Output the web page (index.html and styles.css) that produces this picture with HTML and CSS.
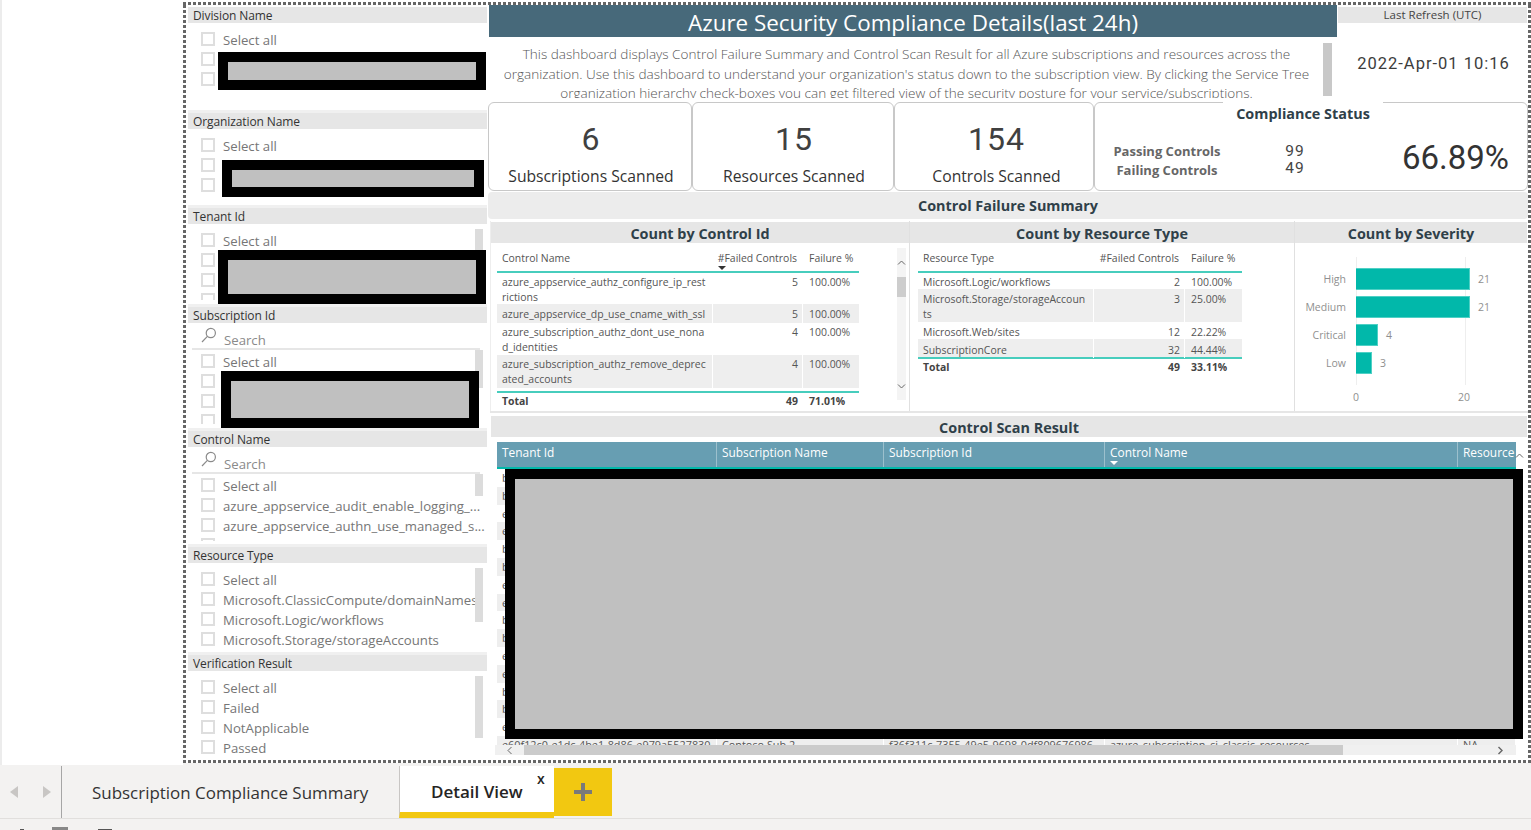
FILE: index.html
```html
<!DOCTYPE html>
<html lang="en">
<head>
<meta charset="utf-8">
<title>Azure Security Compliance Details</title>
<link rel="stylesheet" href="styles.css">
</head>
<body>
<div class="app">
  <div class="workspace">
    <div class="gutter"></div>
    <div class="canvas">
      <div class="slicers">
        <section class="slicer s-division">
          <h3 class="slicer-head">Division Name</h3>
          <div class="slicer-list">
            <div class="opt"><i class="cb"></i>Select all</div>
            <div class="opt"><i class="cb"></i></div>
            <div class="opt"><i class="cb"></i></div>
          </div>
          <div class="redact r-division"></div>
        </section>
        <section class="slicer s-org">
          <h3 class="slicer-head">Organization Name</h3>
          <div class="slicer-list">
            <div class="opt"><i class="cb"></i>Select all</div>
            <div class="opt"><i class="cb"></i></div>
            <div class="opt"><i class="cb"></i></div>
          </div>
          <div class="redact r-org"></div>
        </section>
        <section class="slicer s-tenant">
          <h3 class="slicer-head">Tenant Id</h3>
          <div class="slicer-list clip-tenant">
            <div class="opt"><i class="cb"></i>Select all</div>
            <div class="opt"><i class="cb"></i></div>
            <div class="opt"><i class="cb"></i></div>
            <div class="opt"><i class="cb"></i></div>
          </div>
          <div class="vscroll vs-tenant"></div>
          <div class="redact r-tenant"></div>
        </section>
        <section class="slicer s-sub">
          <h3 class="slicer-head">Subscription Id</h3>
          <div class="search">
            <svg class="search-icon" width="16" height="16" viewBox="0 0 16 16"><circle cx="9.8" cy="6" r="4.6" fill="none" stroke="#8a8a8a" stroke-width="1.2"/><path d="M6.4 9.4 1 15" fill="none" stroke="#8a8a8a" stroke-width="1.2"/></svg>
            <span class="search-text">Search</span>
          </div>
          <div class="slicer-list flush clip-sub">
            <div class="opt"><i class="cb"></i>Select all</div>
            <div class="opt"><i class="cb"></i></div>
            <div class="opt"><i class="cb"></i></div>
            <div class="opt"><i class="cb"></i></div>
          </div>
          <div class="vscroll vs-sub"></div>
          <div class="redact r-sub"></div>
        </section>
        <section class="slicer s-control">
          <h3 class="slicer-head">Control Name</h3>
          <div class="search">
            <svg class="search-icon" width="16" height="16" viewBox="0 0 16 16"><circle cx="9.8" cy="6" r="4.6" fill="none" stroke="#8a8a8a" stroke-width="1.2"/><path d="M6.4 9.4 1 15" fill="none" stroke="#8a8a8a" stroke-width="1.2"/></svg>
            <span class="search-text">Search</span>
          </div>
          <div class="slicer-list flush clip-control">
            <div class="opt"><i class="cb"></i>Select all</div>
            <div class="opt"><i class="cb"></i>azure_appservice_audit_enable_logging_...</div>
            <div class="opt"><i class="cb"></i>azure_appservice_authn_use_managed_s...</div>
            <div class="opt"><i class="cb"></i></div>
          </div>
          <div class="vscroll vs-control"></div>
        </section>
        <section class="slicer s-resource">
          <h3 class="slicer-head">Resource Type</h3>
          <div class="slicer-list">
            <div class="opt"><i class="cb"></i>Select all</div>
            <div class="opt"><i class="cb"></i>Microsoft.ClassicCompute/domainNames</div>
            <div class="opt"><i class="cb"></i>Microsoft.Logic/workflows</div>
            <div class="opt"><i class="cb"></i>Microsoft.Storage/storageAccounts</div>
          </div>
          <div class="vscroll vs-resource"></div>
        </section>
        <section class="slicer s-verify">
          <h3 class="slicer-head">Verification Result</h3>
          <div class="slicer-list">
            <div class="opt"><i class="cb"></i>Select all</div>
            <div class="opt"><i class="cb"></i>Failed</div>
            <div class="opt"><i class="cb"></i>NotApplicable</div>
            <div class="opt"><i class="cb"></i>Passed</div>
          </div>
          <div class="vscroll vs-verify"></div>
        </section>
      </div>

      <div class="main">
        <div class="top-row">
          <div class="intro">
            <h1 class="title">Azure Security Compliance Details(last 24h)</h1>
            <div class="desc-wrap">
              <p class="desc">This dashboard displays Control Failure Summary and Control Scan Result for all Azure subscriptions and resources across the<br>organization. Use this dashboard to understand your organization's status down to the subscription view. By clicking the Service Tree<br>organization hierarchy check-boxes you can get filtered view of the security posture for your service/subscriptions.</p>
              <div class="desc-scroll"></div>
            </div>
          </div>
          <div class="refresh">
            <div class="refresh-head">Last Refresh (UTC)</div>
            <div class="refresh-time">2022-Apr-01 10:16</div>
          </div>
        </div>

        <div class="cards">
          <div class="card c1"><div class="card-value">6</div><div class="card-label">Subscriptions Scanned</div></div>
          <div class="card c2"><div class="card-value">15</div><div class="card-label">Resources Scanned</div></div>
          <div class="card c3"><div class="card-value">154</div><div class="card-label">Controls Scanned</div></div>
          <div class="card status">
            <div class="status-title">Compliance Status</div>
            <div class="status-labels"><div>Passing Controls</div><div>Failing Controls</div></div>
            <div class="status-nums"><div>99</div><div>49</div></div>
            <div class="status-pct">66.89%</div>
          </div>
        </div>

        <div class="section-bar">Control Failure Summary</div>

        <div class="panels">
          <section class="panel p-control">
            <h2 class="panel-head">Count by Control Id</h2>
            <div class="matrix m-control">
              <div class="m-row m-header">
                <div class="m-name">Control Name</div>
                <div class="m-num sorted">#Failed Controls<i class="sort"></i></div>
                <div class="m-pct">Failure %</div>
              </div>
              <div class="m-row h31"><div class="m-name">azure_appservice_authz_configure_ip_rest<br>rictions</div><div class="m-num">5</div><div class="m-pct">100.00%</div></div>
              <div class="m-row h19 alt pad3"><div class="m-name">azure_appservice_dp_use_cname_with_ssl</div><div class="m-num">5</div><div class="m-pct">100.00%</div></div>
              <div class="m-row h32"><div class="m-name">azure_subscription_authz_dont_use_nona<br>d_identities</div><div class="m-num">4</div><div class="m-pct">100.00%</div></div>
              <div class="m-row h33 alt"><div class="m-name">azure_subscription_authz_remove_deprec<br>ated_accounts</div><div class="m-num">4</div><div class="m-pct">100.00%</div></div>
              <div class="m-row m-total gap3"><div class="m-name">Total</div><div class="m-num">49</div><div class="m-pct">71.01%</div></div>
            </div>
            <div class="matrix-scroll">
              <svg width="9" height="7" viewBox="0 0 9 7"><path d="M1 5.5 4.5 2 8 5.5" fill="none" stroke="#666" stroke-width="1"/></svg>
              <div class="matrix-thumb"></div>
              <svg class="arrow-down" width="9" height="7" viewBox="0 0 9 7"><path d="M1 1.5 4.5 5 8 1.5" fill="none" stroke="#666" stroke-width="1"/></svg>
            </div>
          </section>

          <section class="panel p-resource">
            <h2 class="panel-head">Count by Resource Type</h2>
            <div class="matrix m-resource">
              <div class="m-row m-header">
                <div class="m-name">Resource Type</div>
                <div class="m-num">#Failed Controls</div>
                <div class="m-pct">Failure %</div>
              </div>
              <div class="m-row h16"><div class="m-name">Microsoft.Logic/workflows</div><div class="m-num">2</div><div class="m-pct">100.00%</div></div>
              <div class="m-row h33 alt pad3"><div class="m-name">Microsoft.Storage/storageAccoun<br>ts</div><div class="m-num">3</div><div class="m-pct">25.00%</div></div>
              <div class="m-row h17 pad3"><div class="m-name">Microsoft.Web/sites</div><div class="m-num">12</div><div class="m-pct">22.22%</div></div>
              <div class="m-row h18 alt pad4"><div class="m-name">SubscriptionCore</div><div class="m-num">32</div><div class="m-pct">44.44%</div></div>
              <div class="m-row m-total"><div class="m-name">Total</div><div class="m-num">49</div><div class="m-pct">33.11%</div></div>
            </div>
          </section>

          <section class="panel p-severity">
            <h2 class="panel-head">Count by Severity</h2>
            <div class="sev-rows">
              <div class="sev-row"><span class="sev-label">High</span><span class="sev-bar" style="width:114px"></span><span class="sev-val">21</span></div>
              <div class="sev-row"><span class="sev-label">Medium</span><span class="sev-bar" style="width:114px"></span><span class="sev-val">21</span></div>
              <div class="sev-row"><span class="sev-label">Critical</span><span class="sev-bar" style="width:22px"></span><span class="sev-val">4</span></div>
              <div class="sev-row"><span class="sev-label">Low</span><span class="sev-bar" style="width:16px"></span><span class="sev-val">3</span></div>
            </div>
            <div class="sev-axis"><span>0</span><span>20</span></div>
          </section>
        </div>

        <section class="scan">
          <h2 class="scan-head">Control Scan Result</h2>
          <div class="scan-table">
            <div class="scan-row scan-columns">
              <div>Tenant Id</div>
              <div>Subscription Name</div>
              <div>Subscription Id</div>
              <div class="sorted">Control Name<i class="sort sort-white"></i></div>
              <div>Resource</div>
            </div>
            <div class="scan-body">
              <div class="scan-row"><div>b</div></div>
              <div class="scan-row alt"><div>b</div></div>
              <div class="scan-row"><div>e</div></div>
              <div class="scan-row alt"><div>e</div></div>
              <div class="scan-row"><div>b</div></div>
              <div class="scan-row alt"><div>b</div></div>
              <div class="scan-row"><div>e</div></div>
              <div class="scan-row alt"><div>e</div></div>
              <div class="scan-row"><div>b</div></div>
              <div class="scan-row alt"><div>b</div></div>
              <div class="scan-row"><div>e</div></div>
              <div class="scan-row alt"><div>e</div></div>
              <div class="scan-row"><div>b</div></div>
              <div class="scan-row alt"><div>b</div></div>
              <div class="scan-row"><div>e</div></div>
              <div class="scan-row alt"><div>e60f12c0-e1dc-4be1-8d86-e979a5527830</div><div>Contoso Sub 2</div><div>f36f311c-7355-49e5-9698-0df809676986</div><div>azure_subscription_si_classic_resources</div><div>NA</div></div>
            </div>
            <div class="hscroll">
              <svg class="hs-left" width="7" height="9" viewBox="0 0 7 9"><path d="M5.5 1 2 4.5 5.5 8" fill="none" stroke="#666" stroke-width="1"/></svg>
              <div class="hs-thumb"></div>
              <svg class="hs-right" width="7" height="9" viewBox="0 0 7 9"><path d="M1.5 1 5 4.5 1.5 8" fill="none" stroke="#666" stroke-width="1.4"/></svg>
            </div>
          </div>
          <svg class="scan-up" width="9" height="7" viewBox="0 0 9 7"><path d="M1 5.5 4.5 2 8 5.5" fill="none" stroke="#666" stroke-width="1"/></svg>
          <div class="redact r-table"></div>
        </section>
      </div>
    </div>
  </div>

  <nav class="tabs">
    <div class="tab-nav">
      <svg width="8" height="12" viewBox="0 0 8 12"><path d="M8 0v12L0 6z" fill="#c8c6c4"/></svg>
      <svg width="8" height="12" viewBox="0 0 8 12"><path d="M0 0v12l8-6z" fill="#c8c6c4"/></svg>
    </div>
    <div class="tab tab-plain">Subscription Compliance Summary</div>
    <div class="tab tab-active">Detail View<span class="tab-close">x</span></div>
    <div class="tab-add">
      <svg width="18" height="18" viewBox="0 0 18 18"><path d="M7 0h4v7h7v4h-7v7H7v-7H0V7h7z" fill="#7a7a7a"/></svg>
    </div>
  </nav>
  <footer class="status-bar">
    <i class="mark m1"></i><i class="mark m2"></i><i class="mark m3"></i>
  </footer>
</div>
</body>
</html>
```
FILE: styles.css
```css
* { box-sizing: border-box; }
html, body { margin: 0; padding: 0; }
body {
  width: 1531px;
  height: 830px;
  overflow: hidden;
  background: #f3f2f1;
  font-family: "Open Sans", "Liberation Sans", sans-serif;
  color: #333;
}
h1, h2, h3, p { margin: 0; font: inherit; }
i { font-style: normal; }

.app { display: flex; flex-direction: column; height: 830px; }
.workspace { display: flex; height: 765px; flex: none; padding: 2px 0; background: linear-gradient(#fff 763px, #f3f2f1 763px); }
.gutter { width: 183px; border-left: 2px solid #ececec; background: #fff; margin: -2px 0; }

.canvas {
  width: 1348px;
  height: 761px;
  padding: 3px;
  display: flex;
  background-color: #fff;
  background-image:
    repeating-linear-gradient(90deg, #666 0 3px, transparent 3px 5px),
    repeating-linear-gradient(90deg, #666 0 3px, transparent 3px 5px),
    repeating-linear-gradient(0deg, #666 0 3px, transparent 3px 5px),
    repeating-linear-gradient(0deg, #666 0 3px, transparent 3px 5px);
  background-size: 100% 3px, 100% 3px, 3px 100%, 3px 100%;
  background-position: 0 0, 0 100%, 0 0, 100% 0;
  background-repeat: no-repeat;
}

/* slicers */
.slicers { width: 302px; flex: none; padding: 2px 0 0 2px; display: flex; flex-direction: column; }
.slicer { position: relative; width: 299px; border-bottom: 3px solid #f0f0f0; overflow: hidden; flex: none; }
.s-division { height: 106px; }
.s-org { height: 95px; }
.s-tenant { height: 99px; }
.s-sub { height: 124px; }
.s-control { height: 116px; }
.s-resource { height: 108px; }
.s-verify { height: 103px; border-bottom: 0; }
.slicer-head { height: 16px; background: #e6e6e6; padding-left: 5px; font-size: 12px; line-height: 18px; color: #333; letter-spacing: -0.1px; }
.slicer-list { padding: 6px 0 0 13px; overflow: hidden; }
.slicer-list.flush { padding-top: 0; margin-top: 1px; }
.clip-tenant { height: 76px; }
.clip-sub { height: 73px; }
.clip-control { height: 66px; margin-top: 2px; }
.opt { display: flex; align-items: center; height: 20px; padding-top: 1px; font-size: 13.2px; color: #767676; white-space: nowrap; }
.cb { width: 14px; height: 14px; border: 2px solid #dedede; margin: -2px 8px 0 0; flex: none; }
.search { display: flex; align-items: center; height: 27px; margin-left: 4px; width: 288px; padding: 0 0 1px 9px; border-bottom: 2px solid #e6e6e6; font-size: 13.2px; color: #8a8a8a; }
.search-icon { flex: none; margin-right: 7px; }
.search-text { padding-top: 9px; }
.vscroll { position: absolute; left: 287px; width: 8px; background: #dcdcdc; }
.vs-tenant { top: 21px; height: 22px; }
.vs-sub { top: 43px; height: 38px; }
.vs-control { top: 43px; height: 22px; }
.vs-resource { top: 21px; height: 54px; }
.vs-verify { top: 21px; height: 62px; }

.redact { position: absolute; border: 10px solid #000; background: #c0c0c0; }
.r-division { left: 30px; top: 45px; width: 268px; height: 38px; }
.r-org { left: 34px; top: 47px; width: 262px; height: 37px; }
.r-tenant { left: 30px; top: 42px; width: 268px; height: 54px; }
.r-sub { left: 33px; top: 64px; width: 258px; height: 57px; }
.r-table { left: 14px; top: 53px; width: 1018px; height: 270px; }

/* main column */
.main { width: 1040px; flex: none; display: flex; flex-direction: column; }
.top-row { display: flex; height: 97px; flex: none; }
.intro { width: 849px; margin-left: 1px; padding-right: 1px; }
.title { height: 32px; background: #47697a; color: #fff; text-align: center; font-size: 22.4px; line-height: 36px; white-space: nowrap; }
.desc-wrap { position: relative; height: 61px; overflow: hidden; }
.desc { padding-top: 8px; width: 835px; text-align: center; font-size: 13.55px; font-weight: 300; line-height: 19.5px; color: #555; white-space: nowrap; }
.desc-scroll { position: absolute; left: 834px; top: 6px; width: 9px; height: 53px; background: #c8c8c8; }
.refresh { width: 189px; padding-top: 2px; }
.refresh-head { height: 16px; background: #e6e6e6; text-align: center; font-size: 11.5px; line-height: 16px; color: #444; }
.refresh-time { padding-left: 2px; text-align: center; font-family: Roboto, sans-serif; font-size: 16.5px; letter-spacing: 1px; line-height: 20px; margin-top: 31px; color: #3c3c3c; }

.cards { display: flex; height: 89px; flex: none; }
.card { height: 89px; padding-left: 2px; border: 1px solid #c8c8c8; border-radius: 6px; background: #fff; text-align: center; }
.c1 { width: 204px; }
.c2 { width: 202px; }
.c3 { width: 200px; padding-left: 5px; }
.card-value { font-family: Roboto, sans-serif; font-size: 32px; letter-spacing: 1px; line-height: 40px; margin-top: 16px; color: #404040; }
.card-label { font-size: 15.7px; line-height: 22px; margin-top: 6px; color: #333; white-space: nowrap; }

.status { position: relative; width: 434px; padding-left: 0; display: flex; text-align: left; }
.status-title { position: absolute; left: 128px; top: -1px; width: 160px; height: 22px; background: #fff; text-align: center; font-size: 14.4px; font-weight: 700; line-height: 24px; color: #2f4049; white-space: nowrap; }
.status-labels { width: 144px; padding-top: 39px; text-align: center; font-size: 13px; font-weight: 700; line-height: 18.5px; color: #666; white-space: nowrap; }
.status-nums { width: 112px; padding-top: 40px; text-align: center; font-family: Roboto, sans-serif; font-size: 15.5px; letter-spacing: 1px; line-height: 17px; color: #444; }
.status-pct { margin-left: auto; padding: 34px 18px 0 0; font-family: Roboto, sans-serif; font-size: 33px; line-height: 42px; color: #333; }

.section-bar { height: 27px; margin-top: 1px; background: #ececec; border-radius: 4px; text-align: center; font-size: 14.4px; font-weight: 700; line-height: 27px; color: #2f4049; flex: none; }

.panels { display: flex; height: 192px; margin: 2px 0 0 2px; flex: none; border-bottom: 2px solid #e6e6e6; }
.panel { position: relative; flex: none; border-right: 1px solid #e0e0e0; }
.p-control { width: 420px; border-left: 1px solid #eee; }
.p-resource { width: 385px; }
.p-severity { width: 232px; border-right: 0; }
.panel-head { height: 21px; margin-top: 1px; background: #e6e6e6; text-align: center; font-size: 14.4px; font-weight: 700; line-height: 23px; color: #2f4049; }

.matrix { margin-top: 5px; font-size: 10.45px; color: #555; }
.m-control { margin-left: 6px; width: 362px; }
.m-resource { margin-left: 8px; width: 324px; }
.m-row { display: grid; line-height: 14.5px; }
.m-control .m-row { grid-template-columns: 215px 90px 57px; }
.m-resource .m-row { grid-template-columns: 175px 91px 58px; }
.m-name { padding: 2px 0 0 5px; white-space: nowrap; overflow: hidden; }
.m-num { padding: 2px 4px 0 0; text-align: right; border-left: 1px solid #fff; white-space: nowrap; }
.m-pct { padding: 2px 0 0 6px; border-left: 1px solid #fff; white-space: nowrap; }
.m-header { height: 25px; border-bottom: 2px solid #47cdbd; }
.m-header > div { padding-top: 3px; }
.m-header .m-num { padding-right: 5px; }
.m-header .sorted { position: relative; }
.sort { position: absolute; left: 5px; bottom: 1px; border-left: 4px solid transparent; border-right: 4px solid transparent; border-top: 4px solid #333; }
.sort-white { left: 5px; bottom: 2px; border-top-color: #fff; }
.h16 { height: 16px; }
.h17 { height: 17px; }
.h18 { height: 18px; }
.h19 { height: 19px; }
.h31 { height: 31px; }
.h32 { height: 32px; }
.h33 { height: 33px; }
.pad3 > div { padding-top: 3px; }
.pad4 > div { padding-top: 4px; }
.alt { background: #eeeeee; }
.m-total { border-top: 2px solid #47cdbd; font-weight: 700; color: #444; }
.m-total > div { padding-top: 1px; }
.gap3 { margin-top: 3px; }
.matrix-scroll { position: absolute; left: 406px; top: 27px; width: 9px; height: 152px; background: #f4f4f4; display: flex; flex-direction: column; align-items: center; padding-top: 11px; }
.matrix-thumb { width: 9px; height: 20px; margin-top: 11px; background: #cdcdcd; }
.arrow-down { margin-top: auto; margin-bottom: 10px; }

.sev-rows {
  height: 128px;
  margin-top: 14px;
  padding-top: 11px;
  display: flex;
  flex-direction: column;
  gap: 6px;
  background-image: linear-gradient(#eee, #eee), linear-gradient(#eee, #eee);
  background-size: 1px 100%, 1px 100%;
  background-position: 61px 0, 170px 0;
  background-repeat: no-repeat;
}
.sev-row { display: flex; align-items: center; height: 22px; font-size: 10.5px; color: #8f8f8f; }
.sev-label { width: 51px; margin-right: 10px; text-align: right; flex: none; }
.sev-bar { height: 22px; background: #01b8aa; flex: none; border: 1px solid #4fd0c5; border-left: 0; }
.sev-val { margin-left: 8px; }
.sev-axis { display: flex; gap: 98px; padding-left: 56px; margin-top: 5px; font-size: 10.5px; line-height: 14px; color: #8f8f8f; }
.sev-axis span { width: 10px; display: flex; justify-content: center; }

/* scan table */
.scan { position: relative; flex: 1; margin: 3px 0 0 3px; }
.scan-head { height: 21px; margin-right: 1px; background: #e6e6e6; text-align: center; font-size: 14.4px; font-weight: 700; line-height: 23px; color: #2f4049; }
.scan-table { width: 1019px; margin: 5px 0 0 6px; }
.scan-row { display: grid; grid-template-columns: 220px 167px 221px 353px 58px; height: 17.8px; font-size: 10.85px; line-height: 17.8px; color: #555; }
.scan-row > div { padding-left: 5px; white-space: nowrap; overflow: hidden; border-right: 1px solid #fff; }
.scan-columns { height: 27px; background: #679eb2; border-bottom: 2px solid #01b8aa; color: #fff; font-size: 11.9px; line-height: 21px; }
.scan-columns > div { position: relative; border-right: 1px solid #9cc0cd; }
.scan-columns > div:last-child { border-right: 0; }
.scan-body { height: 276px; overflow: hidden; }
.hscroll { position: relative; height: 10px; background: #f0f0f0; margin-left: -2px; }
.hs-thumb { position: absolute; left: 29px; top: 0; width: 819px; height: 10px; background: #cbcbcb; }
.hs-left { position: absolute; left: 11px; top: 1px; }
.hs-right { position: absolute; left: 1002px; top: 1px; }
.scan-up { position: absolute; left: 1024px; top: 36px; }

/* tabs */
.tabs { display: flex; height: 54px; flex: none; background: #f3f2f1; border-bottom: 1px solid #e1dfdd; }
.tab-nav { width: 62px; margin-top: 1px; border-right: 1px solid #a6a6a6; display: flex; align-items: center; gap: 25px; padding: 0 0 0 10px; }
.tab { display: flex; align-items: center; font-size: 16.95px; white-space: nowrap; }
.tab-plain { width: 337px; padding: 2px 0 0 30px; color: #333; }
.tab-active { position: relative; width: 155px; margin-top: 1px; padding: 5px 0 0 31px; background: #fff; border-left: 1px solid #c8c6c4; border-bottom: 6px solid #f2c811; font-weight: 600; font-size: 17px; color: #252423; }
.tab-close { position: absolute; left: 137px; top: 3px; font-size: 14px; font-weight: 600; color: #252423; }
.tab-add { width: 58px; height: 48px; margin-top: 3px; background: #f2c811; display: flex; align-items: center; justify-content: center; }

.status-bar { position: relative; flex: 1; display: flex; align-items: flex-end; background: #f3f2f1; overflow: hidden; }
.mark { width: 4px; height: 1px; background: #555; margin-left: 20px; }
.m2 { width: 16px; height: 3px; margin-left: 28px; background: #888; }
.m3 { width: 14px; height: 1px; margin-left: 30px; }
```
